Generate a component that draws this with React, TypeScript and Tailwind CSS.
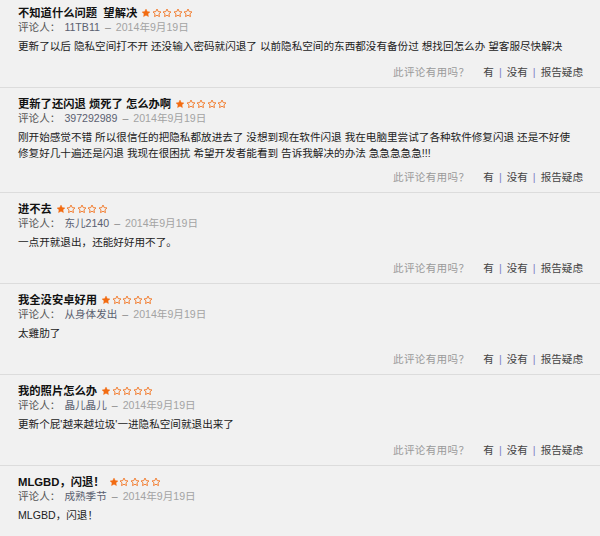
import React from "react"

type Review = {
  title: string
  author: string
  date: string
  body: string[]
}

const reviews: Review[] = [
  {
    title: "不知道什么问题  望解决",
    author: "11TB11",
    date: "2014年9月19日",
    body: ["更新了以后 隐私空间打不开 还没输入密码就闪退了 以前隐私空间的东西都没有备份过 想找回怎么办 望客服尽快解决"],
  },
  {
    title: "更新了还闪退 烦死了 怎么办啊",
    author: "397292989",
    date: "2014年9月19日",
    body: [
      "刚开始感觉不错 所以很信任的把隐私都放进去了 没想到现在软件闪退 我在电脑里尝试了各种软件修复闪退 还是不好使",
      "修复好几十遍还是闪退 我现在很困扰 希望开发者能看到 告诉我解决的办法 急急急急急!!!",
    ],
  },
  {
    title: "进不去",
    author: "东儿2140",
    date: "2014年9月19日",
    body: ["一点开就退出，还能好好用不了。"],
  },
  {
    title: "我全没安卓好用",
    author: "从身体发出",
    date: "2014年9月19日",
    body: ["太雞肋了"],
  },
  {
    title: "我的照片怎么办",
    author: "晶儿晶儿",
    date: "2014年9月19日",
    body: ["更新个屁'越来越垃圾'一进隐私空间就退出来了"],
  },
  {
    title: "MLGBD，闪退！",
    author: "成熟季节",
    date: "2014年9月19日",
    body: ["MLGBD，闪退！"],
  },
]

const STAR = "M12 2.5l2.94 6.1 6.56.86-4.8 4.6 1.2 6.54L12 17.4l-5.9 3.2 1.2-6.54-4.8-4.6 6.56-.86z"

function Stars({ rating }: { rating: number }) {
  return (
    <span className="ml-[4px] inline-flex items-center gap-[0.5px]">
      {[0, 1, 2, 3, 4].map((i) => (
        <svg key={i} width="10" height="10" viewBox="0 0 24 24">
          <path
            d={STAR}
            fill={i < rating ? "#f26b12" : "none"}
            stroke="#f26b12"
            strokeWidth={i < rating ? 1 : 2}
            strokeLinejoin="round"
          />
        </svg>
      ))}
    </span>
  )
}

function ReviewItem({ review, first, last }: { review: Review; first: boolean; last: boolean }) {
  return (
    <div
      className={`pl-[18px] pr-[17px] pb-[6px] ${first ? "pt-[6px]" : "pt-[9px]"} ${last ? "" : "border-b border-[#dcdcdc]"}`}
    >
      <div className="flex items-center h-[14px] text-[11.3px] font-bold text-[#111]">
        <span className="whitespace-pre">{review.title}</span>
        <Stars rating={1} />
      </div>
      <div className="h-[15px] leading-[15px] text-[10.6px] flex items-center">
        <span className="text-[#555]">评论人：</span>
        <span className="ml-[4px] text-[#5a6070]">{review.author}</span>
        <span className="mx-[5px] text-[#888]">–</span>
        <span className="text-[#a3a3a3]">{review.date}</span>
      </div>
      <div className="mt-[3px] text-[10.6px] leading-[16px] text-[#222]">
        {review.body.map((line, i) => (
          <div key={i} className="whitespace-nowrap">{line}</div>
        ))}
      </div>
      {!last && (
        <div
          className={`${review.body.length > 1 ? "mt-[9px]" : "mt-[11px]"} flex justify-end items-center h-[16px] text-[10.6px]`}
        >
          <span className="text-[#9a9a9a] tracking-[0.3px]">此评论有用吗？</span>
          <span className="ml-[14px] text-[#444]">有</span>
          <span className="mx-[5px] text-[#7c80c6]">|</span>
          <span className="text-[#444]">没有</span>
          <span className="mx-[5px] text-[#7c80c6]">|</span>
          <span className="text-[#444]">报告疑虑</span>
        </div>
      )}
    </div>
  )
}

export default function App() {
  return (
    <div className="h-[536px] w-[600px] overflow-hidden bg-[#f1f1f1] font-['Liberation_Sans','Noto_Sans_CJK_SC',sans-serif]">
      {reviews.map((r, i) => (
        <ReviewItem key={i} review={r} first={i === 0} last={i === reviews.length - 1} />
      ))}
    </div>
  )
}
